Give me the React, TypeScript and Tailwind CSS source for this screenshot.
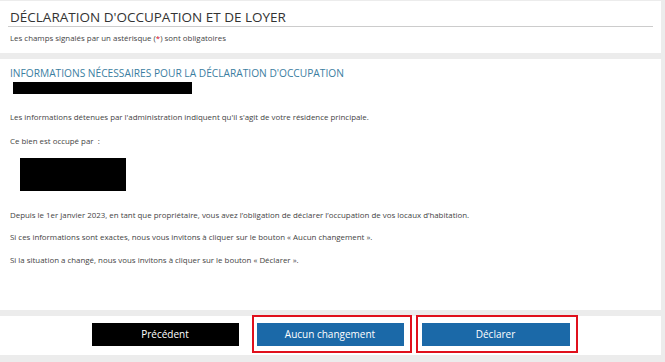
import React from "react";

export default function App() {
  return (
    <div
      className="w-[665px] h-[362px] bg-[#ececec] pt-[1px] overflow-hidden"
      style={{ fontFamily: '"Open Sans", "Liberation Sans", sans-serif' }}
    >
      <div className="w-[661px] flex flex-col gap-[6px]">
        {/* Panel 1 */}
        <div className="bg-white h-[52px] pt-[7px]">
          <div className="mx-2 border-b border-[#cccccc]">
            <h1 className="pl-[2px] text-[13.5px] leading-[18px] text-[#333333] font-normal">
              DÉCLARATION D'OCCUPATION ET DE LOYER
            </h1>
          </div>
          <p className="mt-[5px] px-[10px] text-[7.9px] leading-[12px] text-[#444444]">
            Les champs signalés par un astérisque (<span className="text-[#d0021b]">*</span>) sont obligatoires
          </p>
        </div>

        {/* Panel 2 */}
        <div className="bg-white h-[251px] pt-[7px] px-[10px]">
          <h2 className="text-[10.2px] leading-[14px] text-[#3b7ea1] font-normal">
            INFORMATIONS NÉCESSAIRES POUR LA DÉCLARATION D'OCCUPATION
          </h2>
          <div className="mt-[2px] ml-[3px] w-[179px] h-[12px] bg-black" />
          <p className="mt-[17px] text-[7.9px] leading-[12px] text-[#444444]">
            Les informations détenues par l'administration indiquent qu'il s'agit de votre résidence principale.
          </p>
          <p className="mt-[12px] text-[7.9px] leading-[12px] text-[#444444]">
            Ce bien est occupé par&nbsp; :
          </p>
          <div className="mt-[11px] ml-[10px] w-[106px] h-[33px] bg-black" />
          <p className="mt-[18px] text-[7.9px] leading-[12px] text-[#444444]">
            Depuis le 1er janvier 2023, en tant que propriétaire, vous avez l’obligation de déclarer l’occupation de vos locaux d’habitation.
          </p>
          <p className="mt-[10px] text-[7.9px] leading-[12px] text-[#444444]">
            Si ces informations sont exactes, nous vous invitons à cliquer sur le bouton « Aucun changement ».
          </p>
          <p className="mt-[11px] text-[7.9px] leading-[12px] text-[#444444]">
            Si la situation a changé, nous vous invitons à cliquer sur le bouton « Déclarer ».
          </p>
        </div>

        {/* Panel 3 */}
        <div className="bg-white h-[39px] pt-[7px] flex items-start justify-center gap-[18px]">
          <button className="block w-[147px] h-[23px] bg-black text-white text-[10px] leading-[23px]">
            Précédent
          </button>
          <div className="relative h-[23px]">
            <button className="block w-[147px] h-[23px] bg-[#1b69a8] text-white text-[10px] leading-[23px]">
              Aucun changement
            </button>
            <div className="absolute left-[-5px] top-[-8px] w-[160px] h-[38px] border-2 border-[#e0101c]" />
          </div>
          <div className="relative h-[23px]">
            <button className="block w-[148px] h-[23px] bg-[#1b69a8] text-white text-[10px] leading-[23px]">
              Déclarer
            </button>
            <div className="absolute left-[-6px] top-[-8px] w-[162px] h-[38px] border-2 border-[#e0101c]" />
          </div>
        </div>
      </div>
    </div>
  );
}
